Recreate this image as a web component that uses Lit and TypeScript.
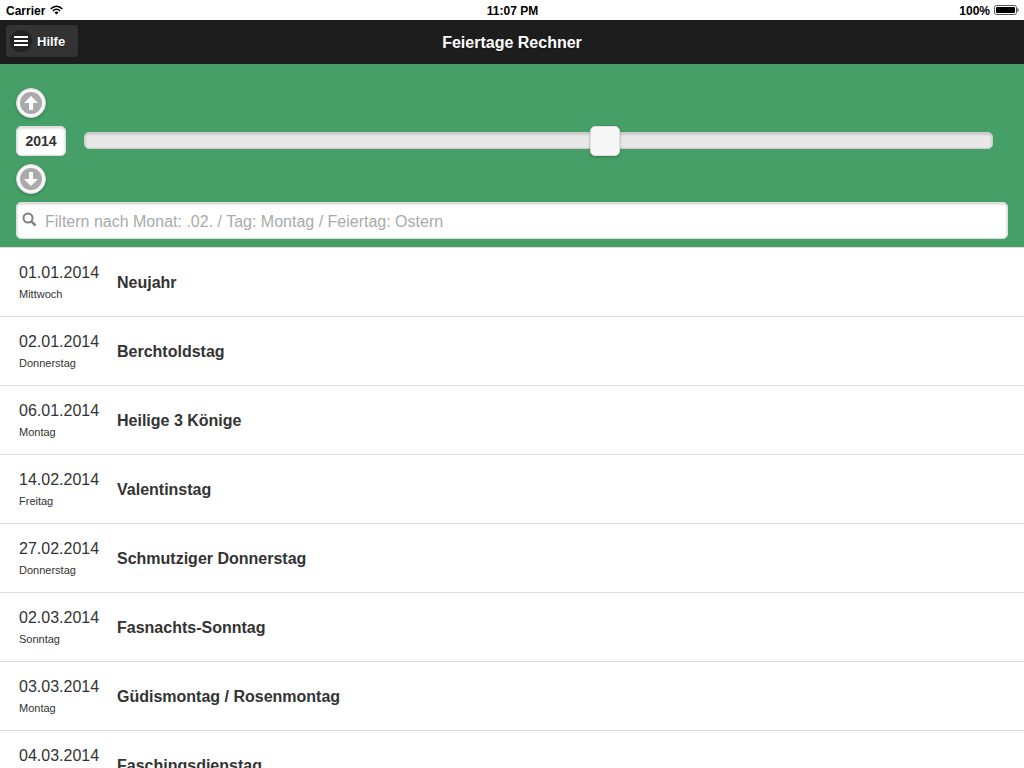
import { LitElement, html, css, svg } from "lit";
import { customElement, state } from "lit/decorators.js";

interface Holiday {
  date: string;
  day: string;
  name: string;
}

const HOLIDAYS: Holiday[] = [
  { date: "01.01.2014", day: "Mittwoch", name: "Neujahr" },
  { date: "02.01.2014", day: "Donnerstag", name: "Berchtoldstag" },
  { date: "06.01.2014", day: "Montag", name: "Heilige 3 Könige" },
  { date: "14.02.2014", day: "Freitag", name: "Valentinstag" },
  { date: "27.02.2014", day: "Donnerstag", name: "Schmutziger Donnerstag" },
  { date: "02.03.2014", day: "Sonntag", name: "Fasnachts-Sonntag" },
  { date: "03.03.2014", day: "Montag", name: "Güdismontag / Rosenmontag" },
  { date: "04.03.2014", day: "Dienstag", name: "Faschingsdienstag" },
];

const MIN_YEAR = 1900;
const MAX_YEAR = 2099;

const arrowUp = svg`<path d="M11 4 L18 11 H13 V18 H9 V11 H4 Z" fill="#fff"/>`;
const arrowDown = svg`<path d="M11 18 L18 11 H13 V4 H9 V11 H4 Z" fill="#fff"/>`;

@customElement("status-bar")
export class StatusBar extends LitElement {
  static styles = css`
    :host {
      display: grid;
      grid-template-columns: 1fr auto 1fr;
      align-items: center;
      height: 20px;
      padding: 2px 5px 0 6px;
      box-sizing: border-box;
      background: #fff;
      color: #000;
      font-size: 12px;
      line-height: 18px;
      font-weight: bold;
    }
    .side {
      display: flex;
      align-items: center;
      gap: 5px;
    }
    .right {
      justify-content: flex-end;
      gap: 4px;
    }
    svg {
      display: block;
      margin-bottom: 2px;
    }
  `;

  render() {
    return html`
      <div class="side">
        <span>Carrier</span>
        <svg width="13" height="10" viewBox="0 0 13 10" fill="none" stroke="#000" stroke-width="1.5" aria-hidden="true">
          <path d="M0.7 3.9 C4 0.2 9 0.2 12.3 3.9" />
          <path d="M2.9 6 C5 3.8 8 3.8 10.1 6" />
          <path d="M4.4 7.4 C5.6 6.1 7.4 6.1 8.6 7.4 L6.5 9.5 Z" fill="#000" stroke="none" />
        </svg>
      </div>
      <span>11:07 PM</span>
      <div class="side right">
        <span>100%</span>
        <svg width="25" height="10" viewBox="0 0 25 10" aria-hidden="true">
          <rect x="0.5" y="0.5" width="22" height="9" rx="2" fill="none" stroke="#555" />
          <rect x="2" y="2" width="19" height="6" rx="1" fill="#000" />
          <path d="M23.5 3 C25 3.5 25 6.5 23.5 7 Z" fill="#222" />
        </svg>
      </div>
    `;
  }
}

@customElement("app-root")
export class AppRoot extends LitElement {
  @state() private year = 2014;
  @state() private query = "";

  static styles = css`
    :host {
      display: flex;
      flex-direction: column;
      height: 100vh;
      overflow: hidden;
      background: #fff;
      color: #333;
      font-family: "Liberation Sans", Helvetica, Arial, sans-serif;
      font-size: 16px;
    }
    button,
    input {
      font-family: inherit;
      margin: 0;
      box-sizing: border-box;
    }
    status-bar,
    .header,
    .controls {
      flex: none;
    }
    .header {
      display: grid;
      grid-template-columns: 1fr auto 1fr;
      align-items: center;
      height: 44px;
      padding: 2px 6px 0;
      box-sizing: border-box;
      background: #1d1d1d;
      color: #fff;
      text-shadow: 0 1px 0 #111;
    }
    .title {
      margin: 0;
      font-size: 16px;
      line-height: 20px;
    }
    .help {
      justify-self: start;
      display: flex;
      align-items: center;
      gap: 5px;
      height: 32px;
      padding: 0 13px 0 4px;
      margin-bottom: 4px;
      border: 0;
      border-radius: 3px;
      background: #333;
      color: #fff;
      font-size: 13px;
      font-weight: bold;
      text-shadow: 0 1px 0 #111;
      box-shadow: 0 1px 3px rgba(0, 0, 0, 0.15);
    }
    .controls {
      display: flex;
      flex-direction: column;
      align-items: flex-start;
      gap: 8px;
      padding: 24px 16px 8px;
      background: #469f66;
    }
    .step {
      display: flex;
      align-items: center;
      justify-content: center;
      width: 30px;
      height: 30px;
      padding: 0;
      border: 1px solid #ddd;
      border-radius: 50%;
      background: #f6f6f6;
      box-shadow: 0 1px 3px rgba(0, 0, 0, 0.25);
    }
    .step svg {
      display: block;
    }
    .year-row {
      display: flex;
      align-items: center;
      align-self: stretch;
      gap: 3px;
    }
    .year {
      width: 50px;
      height: 30px;
      padding: 0;
      border: 1px solid #ddd;
      border-radius: 5px;
      background: #fff;
      color: #333;
      font-size: 14px;
      font-weight: bold;
      text-align: center;
      box-shadow: inset 0 1px 3px rgba(0, 0, 0, 0.2);
    }
    .slider {
      flex: 1;
      display: grid;
      align-items: center;
    }
    .track,
    .range {
      grid-area: 1 / 1;
    }
    .track {
      height: 17px;
      margin: 0 15px 1px;
      box-sizing: border-box;
      border: 1px solid #ccc;
      border-radius: 5px;
      background: #e8e8e8;
      box-shadow: inset 0 1px 3px rgba(0, 0, 0, 0.2);
    }
    .range {
      -webkit-appearance: none;
      appearance: none;
      width: 100%;
      height: 30px;
      background: transparent;
    }
    .range::-webkit-slider-thumb {
      -webkit-appearance: none;
      width: 30px;
      height: 30px;
      border: 1px solid #ddd;
      border-radius: 5px;
      background: #f6f6f6;
      box-shadow: 0 1px 3px rgba(0, 0, 0, 0.25);
    }
    .search {
      display: flex;
      align-items: center;
      align-self: stretch;
      gap: 8px;
      height: 37px;
      padding: 0 5px;
      box-sizing: border-box;
      border: 1px solid #ddd;
      border-radius: 5px;
      background: #fff;
      box-shadow: inset 0 1px 3px rgba(0, 0, 0, 0.2);
    }
    .search svg {
      flex: none;
      margin-bottom: 2px;
    }
    .filter {
      flex: 1;
      min-width: 0;
      height: 35px;
      padding: 2px 0 0;
      border: 0;
      outline: 0;
      background: transparent;
      color: #333;
      font-size: 16px;
    }
    .filter::placeholder {
      color: #aaa;
    }
    .list {
      flex: 1;
      min-height: 0;
      margin: 0;
      padding: 0;
      overflow-y: auto;
      scrollbar-width: none;
      list-style: none;
    }
    .item {
      display: grid;
      grid-template-columns: 98px 1fr;
      align-items: center;
      padding: 15px 19px 14px;
      border-top: 1px solid #ddd;
    }
    .date {
      display: block;
      line-height: 20px;
    }
    .day {
      display: block;
      padding-top: 3px;
      font-size: 11px;
      line-height: 16px;
    }
    .name {
      font-size: 16px;
      line-height: 20px;
      font-weight: bold;
    }
  `;

  private setYear(value: number) {
    if (!Number.isNaN(value)) {
      this.year = Math.min(MAX_YEAR, Math.max(MIN_YEAR, value));
    }
  }

  private matches(h: Holiday) {
    return `${h.date} ${h.day} ${h.name}`.toLowerCase().includes(this.query.toLowerCase());
  }

  render() {
    return html`
      <status-bar></status-bar>
      <header class="header">
        <button class="help" type="button">
          <svg width="22" height="22" viewBox="0 0 22 22" aria-hidden="true">
            <circle cx="11" cy="11" r="11" fill="#222" />
            <path d="M4 6h14v2H4zM4 10h14v2H4zM4 14h14v2H4z" fill="#fff" />
          </svg>
          Hilfe
        </button>
        <h1 class="title">Feiertage Rechner</h1>
      </header>
      <section class="controls">
        <button class="step" type="button" aria-label="Nächstes Jahr" @click=${() => this.setYear(this.year + 1)}>
          <svg width="22" height="22" viewBox="0 0 22 22"><circle cx="11" cy="11" r="11" fill="#aaa" />${arrowUp}</svg>
        </button>
        <div class="year-row">
          <input
            class="year"
            type="text"
            inputmode="numeric"
            aria-label="Jahr"
            .value=${String(this.year)}
            @change=${(e: Event) => this.setYear(parseInt((e.target as HTMLInputElement).value, 10))}
          />
          <div class="slider">
            <div class="track"></div>
            <input
              class="range"
              type="range"
              aria-label="Jahr wählen"
              min=${MIN_YEAR}
              max=${MAX_YEAR}
              .value=${String(this.year)}
              @input=${(e: Event) => this.setYear(Number((e.target as HTMLInputElement).value))}
            />
          </div>
        </div>
        <button class="step" type="button" aria-label="Vorheriges Jahr" @click=${() => this.setYear(this.year - 1)}>
          <svg width="22" height="22" viewBox="0 0 22 22"><circle cx="11" cy="11" r="11" fill="#aaa" />${arrowDown}</svg>
        </button>
        <label class="search">
          <svg width="15" height="15" viewBox="0 0 15 15" fill="none" stroke="#808080" stroke-width="2" aria-hidden="true">
            <circle cx="6" cy="6" r="4.5" />
            <path d="M9.3 9.3 L13.6 13.6" stroke-width="2.4" />
          </svg>
          <input
            class="filter"
            type="text"
            aria-label="Feiertage filtern"
            placeholder="Filtern nach Monat: .02. / Tag: Montag / Feiertag: Ostern"
            .value=${this.query}
            @input=${(e: Event) => (this.query = (e.target as HTMLInputElement).value)}
          />
        </label>
      </section>
      <ul class="list">
        ${HOLIDAYS.filter((h) => this.matches(h)).map(
          (h) => html`
            <li class="item">
              <div>
                <span class="date">${h.date}</span>
                <span class="day">${h.day}</span>
              </div>
              <span class="name">${h.name}</span>
            </li>
          `
        )}
      </ul>
    `;
  }
}
